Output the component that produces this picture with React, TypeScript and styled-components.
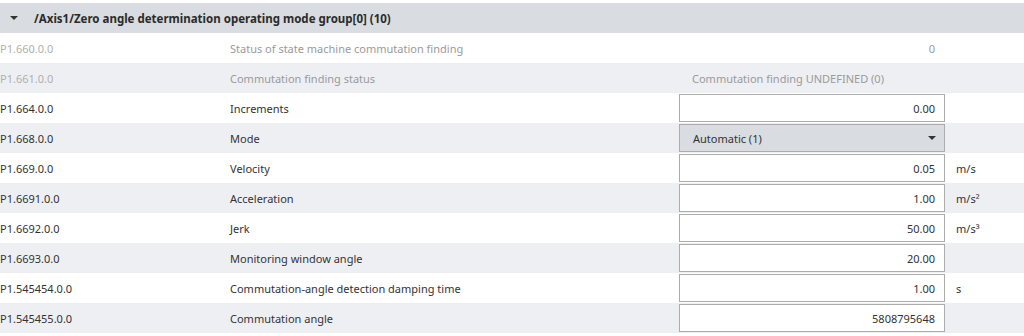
import * as React from "react"
import styled, { createGlobalStyle } from "styled-components"

const GlobalStyle = createGlobalStyle`
body {
  margin: 0;
  background: #ffffff;
  font-family: "Noto Sans", "Open Sans", Arial, sans-serif;
  font-size: 11px;
  color: #333333;
}
`

const Page = styled.div`
padding-top: 3px;
width: 1024px;
`

const GroupHeader = styled.div`
height: 30px;
background-color: #d9dce0;
display: flex;
align-items: center;
padding-left: 10px;
gap: 16px;
font-weight: bold;
font-size: 11.5px;
color: #2b2b2b;
`

const Caret = styled.span`
width: 0;
height: 0;
border-left: 4px solid transparent;
border-right: 4px solid transparent;
border-top: 4px solid #333;
`

const Row = styled.div<{ $shade: boolean }>`
height: 30px;
display: grid;
grid-template-columns: 230px 449px 266px 1fr;
align-items: center;
background-color: ${p => (p.$shade ? "#eeeff3" : "#ffffff")};
`

const Cell = styled.div<{ $muted?: boolean }>`
white-space: nowrap;
color: ${p => (p.$muted ? "#9a9a9a" : "#333333")};
`

const IdCell = styled(Cell)`
color: ${p => (p.$muted ? "#b0b0b0" : "#333333")};
`

const ReadValue = styled.div<{ $align: "left" | "right" }>`
text-align: ${p => p.$align};
padding: 0 10px 0 13px;
color: #9a9a9a;
white-space: nowrap;
`

const Input = styled.div`
height: 28px;
box-sizing: border-box;
border: 1px solid #acacac;
background: #ffffff;
display: flex;
align-items: center;
justify-content: flex-end;
padding-right: 9px;
color: #333;
`

const Select = styled.div`
height: 28px;
box-sizing: border-box;
border: 1px solid #acacac;
background: #d9dce0;
display: flex;
align-items: center;
justify-content: space-between;
padding: 0 8px 0 13px;
color: #333;
`

const Unit = styled.div`
padding-left: 11px;
color: #333;
`

type Param = {
  id: string
  name: string
  kind: "read" | "input" | "select"
  value: string
  align?: "left" | "right"
  unit?: string
}

const params: Param[] = [
  { id: "P1.660.0.0", name: "Status of state machine commutation finding", kind: "read", value: "0", align: "right" },
  { id: "P1.661.0.0", name: "Commutation finding status", kind: "read", value: "Commutation finding UNDEFINED (0)", align: "left" },
  { id: "P1.664.0.0", name: "Increments", kind: "input", value: "0.00" },
  { id: "P1.668.0.0", name: "Mode", kind: "select", value: "Automatic (1)" },
  { id: "P1.669.0.0", name: "Velocity", kind: "input", value: "0.05", unit: "m/s" },
  { id: "P1.6691.0.0", name: "Acceleration", kind: "input", value: "1.00", unit: "m/s²" },
  { id: "P1.6692.0.0", name: "Jerk", kind: "input", value: "50.00", unit: "m/s³" },
  { id: "P1.6693.0.0", name: "Monitoring window angle", kind: "input", value: "20.00" },
  { id: "P1.545454.0.0", name: "Commutation-angle detection damping time", kind: "input", value: "1.00", unit: "s" },
  { id: "P1.545455.0.0", name: "Commutation angle", kind: "input", value: "5808795648" },
]

const App: React.FC<{}> = () => {
  return (
    <Page>
      <GlobalStyle />
      <GroupHeader>
        <Caret />
        <span>/Axis1/Zero angle determination operating mode group[0] (10)</span>
      </GroupHeader>
      {params.map((p, i) => {
        const muted = p.kind === "read"
        return (
          <Row key={p.id} $shade={i % 2 === 1}>
            <IdCell $muted={muted}>{p.id}</IdCell>
            <Cell $muted={muted}>{p.name}</Cell>
            {p.kind === "read" && <ReadValue $align={p.align || "right"}>{p.value}</ReadValue>}
            {p.kind === "input" && <Input>{p.value}</Input>}
            {p.kind === "select" && (
              <Select>
                <span>{p.value}</span>
                <Caret />
              </Select>
            )}
            <Unit>{p.unit}</Unit>
          </Row>
        )
      })}
    </Page>
  )
}

export default App
